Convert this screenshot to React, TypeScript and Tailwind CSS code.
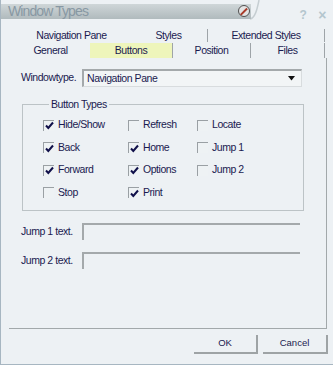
import React from "react";

function Box({ checked }: { checked: boolean }) {
  return (
    <div className="w-[11px] h-[11px] border-t border-l border-[#9aa0a4] bg-[#eef2f4] flex items-center justify-center shrink-0">
      {checked && (
        <svg width="9" height="9" viewBox="0 0 9 9">
          <path d="M1 4.5 L3.3 7 L8 1.5" stroke="#10104a" strokeWidth="2" fill="none" />
        </svg>
      )}
    </div>
  );
}

function Check({ label, checked }: { label: string; checked: boolean }) {
  return (
    <div className="flex items-center gap-[4px] h-[22.5px]">
      <Box checked={checked} />
      <span>{label}</span>
    </div>
  );
}

function Sep({ h }: { h: string }) {
  return <div className={`w-px bg-[#9ea4a8] ${h}`} />;
}

export default function App() {
  return (
    <div className="w-[333px] h-[365px] bg-[#edf1f4] border-l border-b border-[#a7b6c1] flex flex-col font-['Liberation_Sans',Arial,sans-serif] text-[10.5px] tracking-[-0.45px] text-[#1a1a50] overflow-hidden">
      {/* Title bar */}
      <div className="h-[28px] flex items-start shrink-0">
        <div className="mt-[4px] w-[250px] h-[15px] bg-gradient-to-b from-[#cfd6d8] to-[#b0babd] flex items-center pl-[7px] relative">
          <span className="text-[14px] leading-[15px] text-[#8898a3] tracking-[-0.9px]">Window Types</span>
          <div className="absolute right-[1px] top-[1px] w-[12px] h-[12px] rounded-full border border-[#505050] bg-[#e4e4e4] flex items-center justify-center">
            <div className="w-[1.5px] h-[9px] bg-[#a83a28] rotate-45" />
          </div>
        </div>
        <svg width="12" height="20" viewBox="0 0 12 20" className="-ml-px">
          <path d="M0 19 C5 18 7 10 9 0" stroke="#c6ced2" strokeWidth="1.5" fill="none" />
        </svg>
        <div className="flex-1" />
        <span className="mt-[6px] text-[12px] font-bold text-[#b4c6ce] mr-[12px]">?</span>
        <span className="mt-[5px] text-[14px] font-bold text-[#b4c6ce] mr-[7px]">×</span>
      </div>
      {/* Tabs row 1 */}
      <div className="h-[15px] flex items-center shrink-0">
        <div className="w-[129px] text-center pl-[12px]">Navigation Pane</div>
        <div className="w-[77px] text-center">Styles</div>
        <Sep h="h-[13px]" />
        <div className="w-[116px] text-center">Extended Styles</div>
        <Sep h="h-[13px]" />
      </div>
      {/* Tabs row 2 */}
      <div className="h-[15px] flex items-stretch shrink-0">
        <div className="w-[89px] pl-[10px] text-center flex items-center justify-center">General</div>
        <div className="w-[82px] bg-[#eef5bb] flex items-center justify-center">Buttons</div>
        <Sep h="h-[15px]" />
        <div className="w-[77px] flex items-center justify-center">Position</div>
        <Sep h="h-[15px]" />
        <div className="w-[73px] flex items-center justify-center">Files</div>
        <Sep h="h-[15px]" />
      </div>
      {/* Panel */}
      <div className="ml-[8px] w-[318px] h-[271px] border-r border-b border-[#a2a8aa] flex flex-col pl-[12px] shrink-0">
        <div className="mt-[11px] flex items-center h-[18px]">
          <span className="w-[61px]">Windowtype.</span>
          <div className="w-[220px] h-[18px] border-t-2 border-l-2 border-[#a4a9ab] border-r border-b border-r-[#d8dcde] border-b-[#d8dcde] bg-[#f2f5f6] flex items-center justify-between pl-[3px] pr-[6px]">
            <span>Navigation Pane</span>
            <svg width="7" height="5" viewBox="0 0 7 5"><path d="M0 0 H7 L3.5 4.5 Z" fill="#101010" /></svg>
          </div>
        </div>
        <fieldset className="mt-[11px] ml-px w-[282px] h-[113px] border border-[#bcc3c6] pl-[20px]">
          <legend className="ml-[6px] px-[2px] leading-[12px]">Button Types</legend>
          <div className="grid grid-cols-[85px_69px_80px] mt-[4px]">
            <Check label="Hide/Show" checked />
            <Check label="Refresh" checked={false} />
            <Check label="Locate" checked={false} />
            <Check label="Back" checked />
            <Check label="Home" checked />
            <Check label="Jump 1" checked={false} />
            <Check label="Forward" checked />
            <Check label="Options" checked />
            <Check label="Jump 2" checked={false} />
            <Check label="Stop" checked={false} />
            <Check label="Print" checked />
          </div>
        </fieldset>
        <div className="mt-[12px] flex items-center h-[17px]">
          <span className="w-[61px]">Jump 1 text.</span>
          <div className="w-[218px] h-[17px] border-t-2 border-l-2 border-[#a4a9ab] bg-[#edf1f4]" />
        </div>
        <div className="mt-[12px] flex items-center h-[17px]">
          <span className="w-[61px]">Jump 2 text.</span>
          <div className="w-[218px] h-[17px] border-t-2 border-l-2 border-[#a4a9ab] bg-[#edf1f4]" />
        </div>
      </div>
      {/* Buttons */}
      <div className="mt-[6px] flex justify-end gap-[5px] pr-[5px]">
        <div className="w-[64px] h-[19px] border-r-2 border-b-2 border-[#9ea3a5] flex items-center justify-center text-[9.5px] tracking-[0px]">OK</div>
        <div className="w-[65px] h-[19px] border-r-2 border-b-2 border-[#9ea3a5] flex items-center justify-center text-[9.5px] tracking-[0px]">Cancel</div>
      </div>
    </div>
  );
}
